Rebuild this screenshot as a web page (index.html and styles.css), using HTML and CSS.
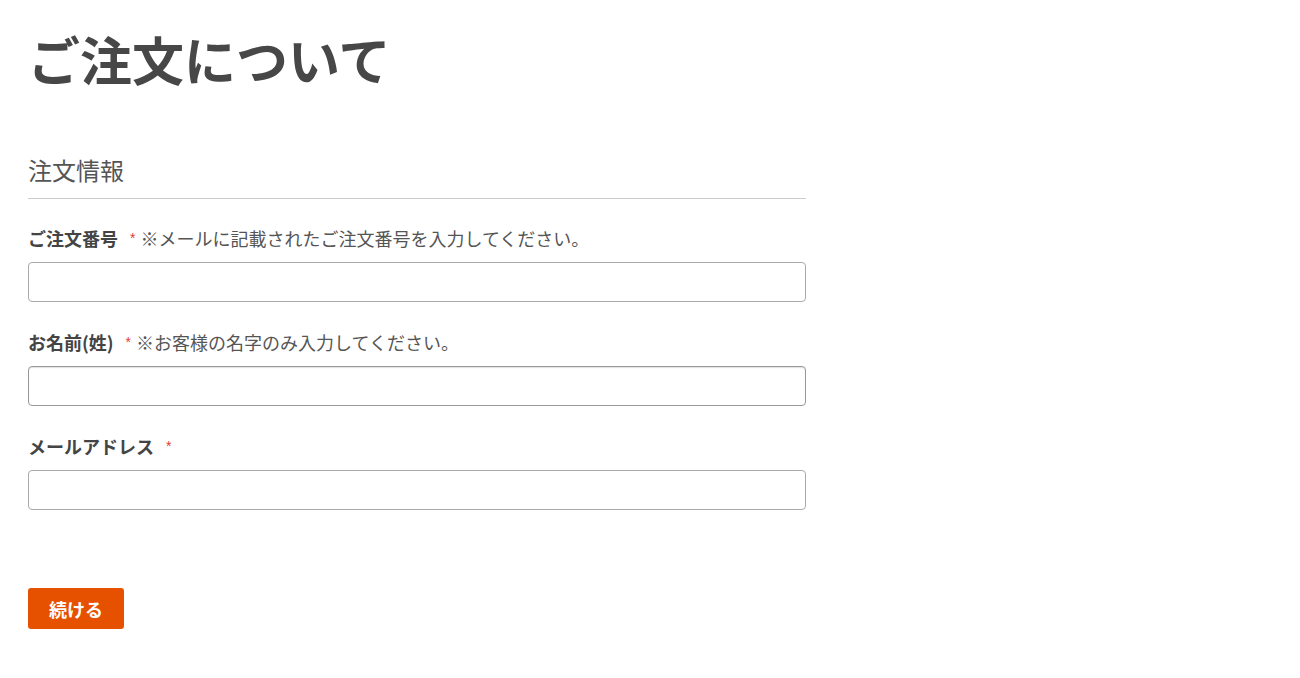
FILE: index.html
```html
<!DOCTYPE html>
<html lang="ja">
<head>
<meta charset="utf-8">
<title>ご注文について</title>
<link rel="stylesheet" href="styles.css">
</head>
<body>
<main class="page">
  <h1 class="title">ご注文について</h1>
  <form class="form">
    <h2 class="section">注文情報</h2>
    <div class="field">
      <label class="label"><span class="name">ご注文番号</span><span class="req">*</span><span class="note">※メールに記載されたご注文番号を入力してください。</span></label>
      <input class="input" type="text">
    </div>
    <div class="field">
      <label class="label"><span class="name">お名前(姓)</span><span class="req">*</span><span class="note">※お客様の名字のみ入力してください。</span></label>
      <input class="input input-active" type="text">
    </div>
    <div class="field">
      <label class="label"><span class="name">メールアドレス</span><span class="req">*</span></label>
      <input class="input" type="text">
    </div>
    <div class="actions">
      <button class="btn" type="button">続ける</button>
    </div>
  </form>
</main>
</body>
</html>
```
FILE: styles.css
```css
html, body {
  margin: 0;
  padding: 0;
  background: #fff;
}
body {
  font-family: "Noto Sans CJK JP", "Noto Sans", sans-serif;
  color: #444;
}
.page {
  padding: 19px 28px 0;
}
.title {
  margin: 0;
  font-size: 52px;
  font-weight: 700;
  line-height: 80px;
  color: #474747;
}
.form {
  width: 778px;
  margin-top: 57px;
}
.section {
  margin: 0;
  font-size: 24px;
  font-weight: 400;
  line-height: 28px;
  color: #555;
  padding-bottom: 14px;
  border-bottom: 1px solid #ccc;
}
.field {
  margin-top: 27px;
}
.field + .field {
  margin-top: 28px;
}
.label {
  display: flex;
  align-items: center;
  height: 24px;
  font-size: 18px;
  line-height: 24px;
  color: #444;
}
.name {
  font-weight: 700;
}
.req {
  align-self: flex-start;
  font-family: "Liberation Sans", sans-serif;
  color: #e53935;
  font-size: 14px;
  line-height: 24px;
  margin-left: 12px;
  margin-right: 5px;
}
.note {
  color: #555;
}
.input {
  display: block;
  box-sizing: border-box;
  width: 100%;
  height: 40px;
  margin-top: 12px;
  border: 1px solid #aaa;
  border-radius: 4px;
  background: #fff;
  font: inherit;
  padding: 0 10px;
}
.input-active {
  border-color: #999;
  box-shadow: inset 0 1px 1px rgba(0, 0, 0, 0.12);
}
.actions {
  margin-top: 78px;
}
.btn {
  height: 41px;
  padding: 0 21px;
  border: none;
  border-radius: 3px;
  background: #e65100;
  color: #fff;
  font-family: inherit;
  font-size: 18px;
  font-weight: 700;
}
```
